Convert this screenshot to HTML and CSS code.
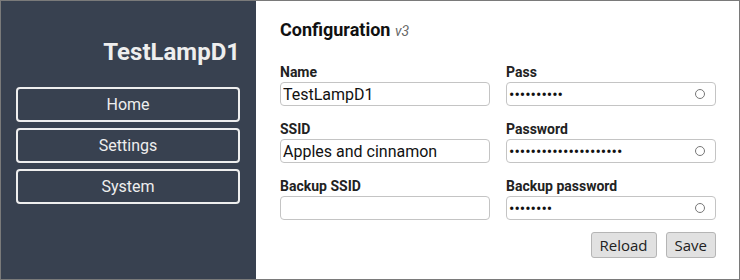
FILE: index.html
```html
<!DOCTYPE html>
<html lang="en">
<head>
  <meta charset="UTF-8">
  <meta name="viewport" content="width=device-width, initial-scale=1.0">
  <title>TestLampD1 - Settings</title>
  <link rel="stylesheet" href="styles.css">
</head>
<body>
  <div class="page">
    <nav class="sidebar">
      <h1 class="device-name">TestLampD1</h1>
      <a class="nav-btn" href="#">Home</a>
      <a class="nav-btn" href="#">Settings</a>
      <a class="nav-btn" href="#">System</a>
    </nav>

    <main class="content">
      <h2 class="title">Configuration <span class="version">v3</span></h2>

      <form class="config-form">
        <div class="field">
          <label for="name">Name</label>
          <input id="name" type="text" value="TestLampD1">
        </div>
        <div class="field">
          <label for="pass">Pass</label>
          <div class="pw-wrap">
            <input id="pass" type="password" value="abcdefghij">
            <span class="eye"></span>
          </div>
        </div>

        <div class="field">
          <label for="ssid">SSID</label>
          <input id="ssid" type="text" value="Apples and cinnamon">
        </div>
        <div class="field">
          <label for="password">Password</label>
          <div class="pw-wrap">
            <input id="password" type="password" value="abcdefghijklmnopqrstu">
            <span class="eye"></span>
          </div>
        </div>

        <div class="field">
          <label for="bssid">Backup SSID</label>
          <input id="bssid" type="text" value="">
        </div>
        <div class="field">
          <label for="bpassword">Backup password</label>
          <div class="pw-wrap">
            <input id="bpassword" type="password" value="abcdefgh">
            <span class="eye"></span>
          </div>
        </div>

        <div class="actions">
          <button type="button">Reload</button>
          <button type="button">Save</button>
        </div>
      </form>
    </main>
  </div>
</body>
</html>
```

FILE: styles.css
```css
html, body {
  margin: 0;
  padding: 0;
}

body {
  font-family: Roboto, "Noto Sans", Arial, sans-serif;
  color: #222;
}

.page {
  display: flex;
  width: 740px;
  height: 280px;
  box-sizing: border-box;
  border: 1px solid #7a7a7a;
}

/* Sidebar */
.sidebar {
  width: 255px;
  background-color: #384150;
  padding: 36px 16px 0 15px;
  box-sizing: border-box;
  display: flex;
  flex-direction: column;
  gap: 6px;
}

.device-name {
  margin: 0 0 14px;
  text-align: right;
  font-size: 24px;
  line-height: 30px;
  font-weight: bold;
  color: #eee;
}

.nav-btn {
  display: block;
  height: 35px;
  line-height: 31px;
  box-sizing: border-box;
  border: 2px solid #eee;
  border-radius: 4px;
  text-align: center;
  font-size: 16px;
  color: #eee;
  text-decoration: none;
}

/* Main content */
.content {
  flex: 1;
  padding: 17px 23px 0 24px;
  background-color: #fff;
}

.title {
  margin: 0 0 21px;
  font-size: 18px;
  line-height: 24px;
  font-weight: bold;
  color: #111;
}

.version {
  font-size: 14px;
  font-weight: normal;
  font-style: italic;
  color: #666;
}

.config-form {
  display: grid;
  grid-template-columns: 1fr 1fr;
  column-gap: 16px;
  row-gap: 15px;
}

.field label {
  display: block;
  font-size: 14px;
  line-height: 16px;
  font-weight: bold;
  margin-bottom: 2px;
}

.field input {
  display: block;
  width: 100%;
  height: 24px;
  box-sizing: border-box;
  border: 1px solid #c4c4c4;
  border-radius: 4px;
  padding: 0 2px;
  font-family: Roboto, Arial, sans-serif;
  font-size: 16px;
  color: #111;
  outline: none;
}

.pw-wrap {
  position: relative;
}

.pw-wrap input {
  padding-right: 24px;
}

.eye {
  position: absolute;
  right: 11px;
  top: 7px;
  width: 8px;
  height: 8px;
  border: 1.5px solid #777;
  border-radius: 50%;
}

.actions {
  grid-column: 2;
  display: flex;
  justify-content: flex-end;
  gap: 9px;
  margin-top: -3px;
}

.actions button {
  height: 26px;
  padding: 0 8px;
  font-family: "Open Sans", "DejaVu Sans", sans-serif;
  font-size: 15px;
  color: #222;
  background-color: #e1e1e1;
  border: 1px solid #b5b5b5;
  border-radius: 3px;
}
```
